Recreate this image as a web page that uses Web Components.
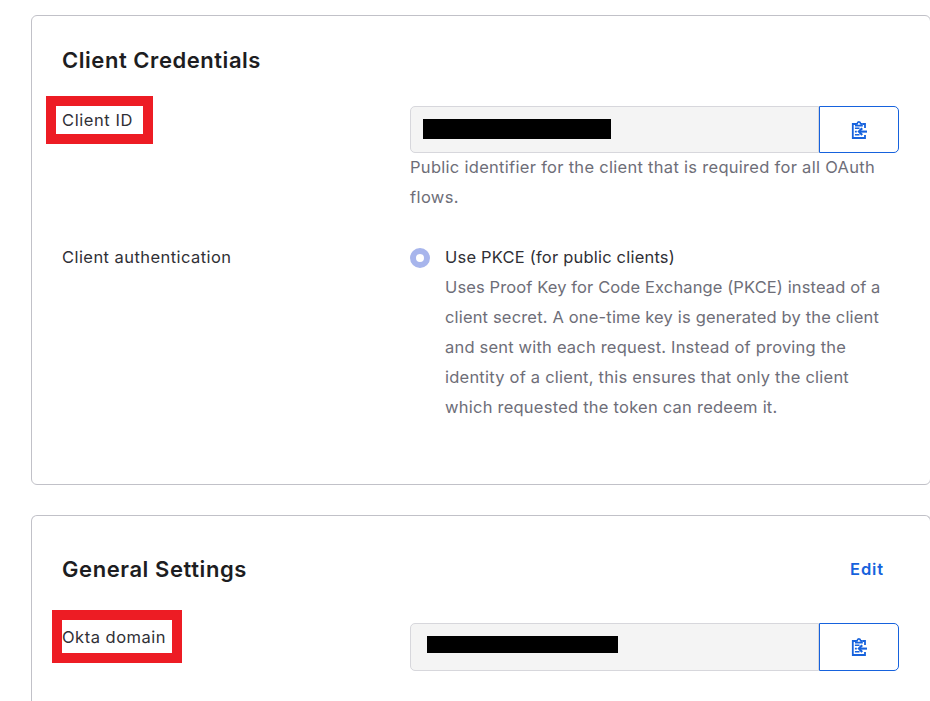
<!DOCTYPE html>
<html lang="en">
<head>
<meta charset="utf-8">
<title>Application settings</title>
<style>
html,body{margin:0;background:#fff;overflow:hidden}
body{height:701px;font:400 16.5px/30px Inter,"Liberation Sans",sans-serif;color:#303036}
</style>
</head>
<body>
<settings-page></settings-page>
<script>
class BaseElement extends HTMLElement {
  constructor() {
    super();
    this.attachShadow({ mode: "open" }).innerHTML = this.constructor.markup;
  }
}

/* One line of text, tracked so that it fills the given measure. */
customElements.define("text-line", class extends BaseElement {
  static markup = `<style>:host{display:block;white-space:nowrap;height:30px}span{display:inline-block;font-kerning:normal}</style><span><slot></slot></span>`;
  connectedCallback() {
    const span = this.shadowRoot.querySelector("span");
    const natural = span.getBoundingClientRect().width;
    const gap = (Number(this.getAttribute("measure")) - natural) / this.textContent.length;
    span.style.letterSpacing = gap.toFixed(3) + "px";
  }
});

customElements.define("settings-card", class extends BaseElement {
  static markup = `<style>
    :host{display:block;box-sizing:border-box;width:900px;height:470px;border:1px solid #c1c1c8;border-radius:6px;padding:var(--card-top,29px) 31px 0 30px;background:#fff}
    header{display:flex;justify-content:space-between;padding-right:15px;margin-bottom:30px;color:#1d1d21;font-size:22px;font-weight:600}
  </style><header><slot name="title"></slot><slot name="action"></slot></header><slot></slot>`;
});

customElements.define("form-row", class extends BaseElement {
  static markup = `<style>
    :host{display:grid;grid-template-columns:348px 489px;margin-bottom:30px}
    .label{position:relative;justify-self:start}
  </style><div class="label"><slot name="label"></slot></div><div><slot></slot></div>`;
});

/* Red frame laid over a label. */
customElements.define("mark-frame", class extends BaseElement {
  static markup = `<style>:host{position:absolute;box-sizing:border-box;border:10px solid #ed1c24;pointer-events:none}</style>`;
});

customElements.define("copy-button", class extends BaseElement {
  static markup = `<style>
    :host{display:block;width:80px}
    button{display:flex;align-items:flex-start;justify-content:center;box-sizing:border-box;width:100%;height:100%;margin:0;padding:14px 0 0;border:1px solid #1662dd;border-radius:0 5px 5px 0;background:#fff;color:#1662dd}
    svg{display:block}
  </style><button aria-label="Copy to clipboard"><svg width="16" height="18" viewBox="0 0 16 18" fill="none" stroke="currentColor">
    <path d="M4 3H1.8V17H14V14M14 7V3H11.8" stroke-width="1.8"/>
    <path d="M4.8 4.6V2.7H6.2C6.3 1.4 6.9.9 7.9.9S9.5 1.4 9.6 2.7H11V4.6Z" stroke-width="1.6"/>
    <path d="M3.9 7.3H8.5M3.9 10.6H5.8M3.9 13.8H8.5" stroke-width="1.6"/>
    <path d="M16 10.6H8.4" stroke-width="2.1"/><path d="M11.2 7.2L7.9 10.6L11.2 14" stroke-width="2.2"/>
  </svg></button>`;
});

customElements.define("copy-field", class extends BaseElement {
  static markup = `<style>
    :host{display:flex;height:var(--h,47px);margin-top:1px}
    .value{flex:1;box-sizing:border-box;border:1px solid #d7d7dc;border-radius:5px 0 0 5px;background:#f4f4f4;padding:12px 0 0 var(--inset,12px)}
    i{display:block;width:var(--w,188px);height:var(--bar,20px);background:#000}
  </style><div class="value"><i></i></div><copy-button></copy-button>`;
});

customElements.define("help-text", class extends BaseElement {
  static markup = `<style>:host{display:block;color:#6e6e78}</style><slot></slot>`;
});

customElements.define("radio-option", class extends BaseElement {
  static markup = `<style>
    :host{display:flex;gap:15px}
    i{box-sizing:border-box;width:20px;height:20px;margin-top:6px;border:6px solid #a7b5ec;border-radius:50%;background:#fff}
  </style><i></i><div><slot></slot></div>`;
});

customElements.define("settings-page", class extends BaseElement {
  static markup = `<style>
    :host{display:flex;flex-direction:column;gap:30px;box-sizing:border-box;height:701px;padding:15px 0 0 31px;overflow:hidden}
    settings-card{flex:none}
    settings-card.general{height:186px;border-bottom:0;border-radius:6px 6px 0 0}
    .edit{color:#1662dd;font-size:16.5px;font-weight:600}
    .id-frame{left:-16px;top:-9px;width:107px;height:48px}
    .domain-frame{left:-10px;top:-12px;width:130px;height:53px}
    .general{--card-top:38px}
    .general form-row{margin:38px 0 0}
    .general copy-field{--h:48px;--inset:16px;--w:191px;--bar:17px}
  </style>
  <settings-card>
    <text-line slot="title" measure="199">Client Credentials</text-line>
    <form-row>
      <text-line slot="label" measure="71">Client ID</text-line>
      <mark-frame slot="label" class="id-frame"></mark-frame>
      <copy-field></copy-field>
      <help-text style="margin-top:-1px">
        <text-line measure="465">Public identifier for the client that is required for all OAuth</text-line>
        <text-line measure="49">flows.</text-line>
      </help-text>
    </form-row>
    <form-row>
      <text-line slot="label" measure="169.5">Client authentication</text-line>
      <radio-option>
        <text-line measure="230">Use PKCE (for public clients)</text-line>
        <help-text>
          <text-line measure="435.5">Uses Proof Key for Code Exchange (PKCE) instead of a</text-line>
          <text-line measure="434">client secret. A one-time key is generated by the client</text-line>
          <text-line measure="401">and sent with each request. Instead of proving the</text-line>
          <text-line measure="404">identity of a client, this ensures that only the client</text-line>
          <text-line measure="332.5">which requested the token can redeem it.</text-line>
        </help-text>
      </radio-option>
    </form-row>
  </settings-card>
  <settings-card class="general">
    <text-line slot="title" measure="185">General Settings</text-line>
    <text-line slot="action" class="edit" measure="34">Edit</text-line>
    <form-row>
      <text-line slot="label" measure="104">Okta domain</text-line>
      <mark-frame slot="label" class="domain-frame"></mark-frame>
      <copy-field></copy-field>
    </form-row>
  </settings-card>`;
});
</script>
</body>
</html>
